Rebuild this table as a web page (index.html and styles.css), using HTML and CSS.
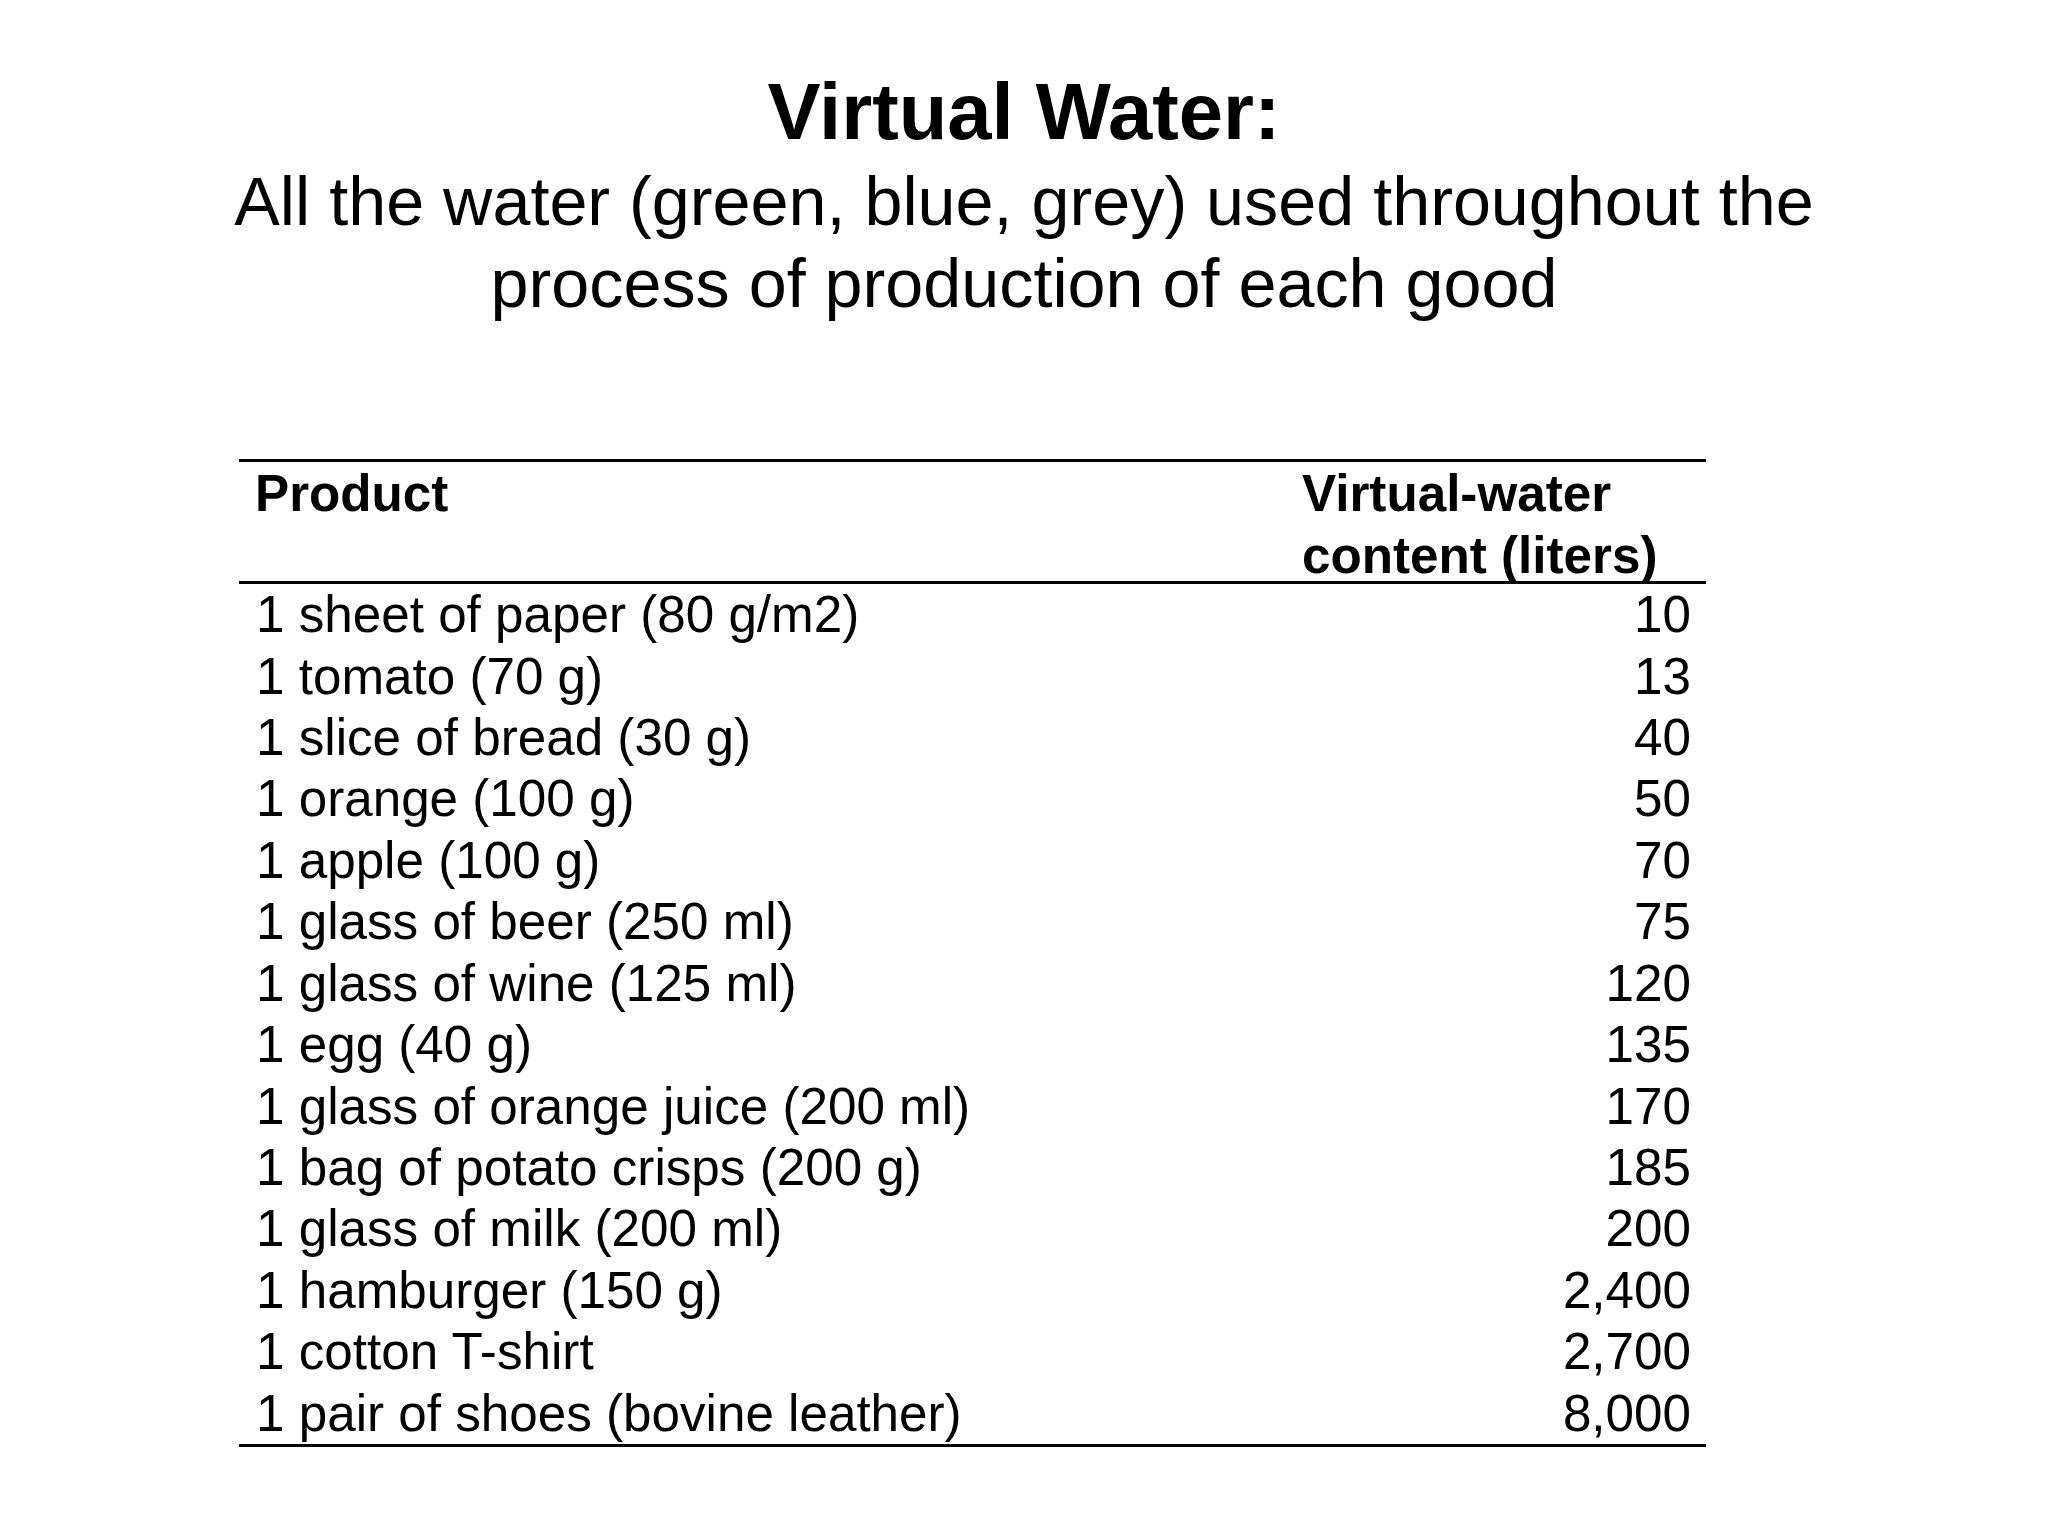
FILE: index.html
```html
<!DOCTYPE html>
<html lang="en">
<head>
<meta charset="utf-8">
<title>Virtual Water</title>
<link rel="stylesheet" href="styles.css">
</head>
<body>
<div class="slide">
  <header class="heading">
    <h1 class="title">Virtual Water:</h1>
    <p class="subtitle">All the water (green, blue, grey) used throughout the process of production of each good</p>
  </header>
  <div class="vw-table">
    <div class="vw-head">
      <div class="cell col-product">Product</div>
      <div class="cell col-value head-value">Virtual-water<br>content (liters)</div>
    </div>
    <div class="vw-body">
      <div class="cell col-product">1 sheet of paper (80 g/m2)</div><div class="cell col-value">10</div>
      <div class="cell col-product">1 tomato (70 g)</div><div class="cell col-value">13</div>
      <div class="cell col-product">1 slice of bread (30 g)</div><div class="cell col-value">40</div>
      <div class="cell col-product">1 orange (100 g)</div><div class="cell col-value">50</div>
      <div class="cell col-product">1 apple (100 g)</div><div class="cell col-value">70</div>
      <div class="cell col-product">1 glass of beer (250 ml)</div><div class="cell col-value">75</div>
      <div class="cell col-product">1 glass of wine (125 ml)</div><div class="cell col-value">120</div>
      <div class="cell col-product">1 egg (40 g)</div><div class="cell col-value">135</div>
      <div class="cell col-product">1 glass of orange juice (200 ml)</div><div class="cell col-value">170</div>
      <div class="cell col-product">1 bag of potato crisps (200 g)</div><div class="cell col-value">185</div>
      <div class="cell col-product">1 glass of milk (200 ml)</div><div class="cell col-value">200</div>
      <div class="cell col-product">1 hamburger (150 g)</div><div class="cell col-value">2,400</div>
      <div class="cell col-product">1 cotton T-shirt</div><div class="cell col-value">2,700</div>
      <div class="cell col-product">1 pair of shoes (bovine leather)</div><div class="cell col-value">8,000</div>
    </div>
  </div>
</div>
</body>
</html>
```
FILE: styles.css
```css
html, body {
  margin: 0;
  padding: 0;
  background: #ffffff;
}

body {
  font-family: "Liberation Sans", Arial, sans-serif;
  color: #000000;
}

.slide {
  width: 2048px;
  height: 1536px;
  box-sizing: border-box;
  padding-top: 64px;
  overflow: hidden;
}

.heading {
  display: flex;
  flex-direction: column;
  align-items: center;
}

.title {
  margin: 0;
  font-size: 79.6px;
  line-height: 95.5px;
  font-weight: bold;
  text-align: center;
}

.subtitle {
  margin: 0;
  width: 1700px;
  font-size: 68.3px;
  line-height: 82px;
  text-align: center;
}

.vw-table {
  margin-top: 135px;
  margin-left: 239px;
  width: 1467px;
  border-top: 3px solid #000;
  border-bottom: 3px solid #000;
  font-size: 51.2px;
  line-height: 61.4px;
}

.vw-head {
  display: grid;
  grid-template-columns: 1fr 417px;
  height: 118px;
  padding-top: 1.6px;
  border-bottom: 3px solid #000;
  font-weight: bold;
}

.vw-body {
  display: grid;
  grid-template-columns: 1fr 417px;
  grid-auto-rows: 61.45px;
}

.cell {
  white-space: nowrap;
}

.col-product {
  padding-left: 17px;
}

.vw-head .col-product {
  padding-left: 16px;
}

.col-value {
  padding-left: 13px;
  padding-right: 15px;
  text-align: right;
}

.head-value {
  text-align: left;
}
```
